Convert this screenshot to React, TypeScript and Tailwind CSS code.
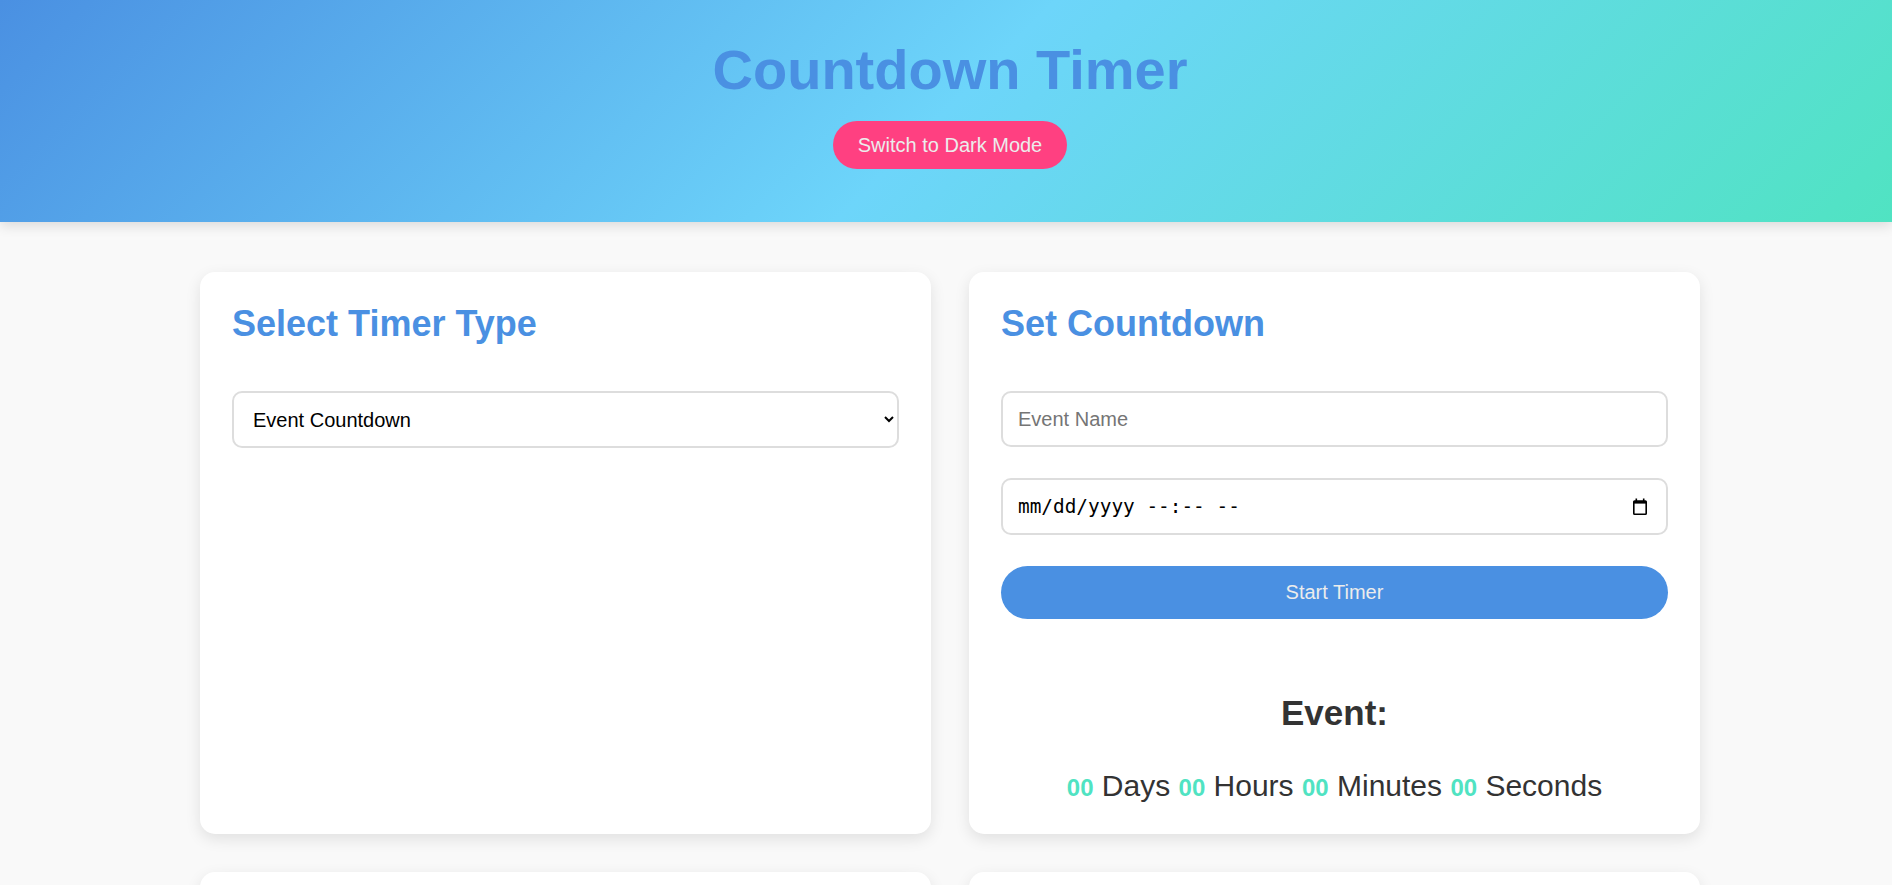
const Num = ({ value }: { value: string }) => (
  <span className="text-[24px] font-bold text-[#50e3c2]">{value}</span>
)

const CalendarIcon = () => (
  <svg width="14" height="17" viewBox="0 0 14 17" fill="none" className="text-black">
    <rect x="2.5" y="0.5" width="1.6" height="3.5" fill="currentColor" />
    <rect x="9.9" y="0.5" width="1.6" height="3.5" fill="currentColor" />
    <rect x="0.8" y="3" width="12.4" height="13.2" rx="0.8" stroke="currentColor" strokeWidth="1.6" />
    <rect x="0.8" y="3" width="12.4" height="2.6" fill="currentColor" />
  </svg>
)

const App = () => {
  return (
    <div className="min-h-screen bg-[#f9f9f9] font-['Liberation_Sans',Arial,sans-serif] leading-[normal] text-[#333]">
      <header className="flex h-[222px] flex-col items-center bg-[linear-gradient(135deg,#4a90e2,#6dd5fa,#50e3c2)] pl-2 pt-[38px] shadow-[0_4px_12px_rgba(0,0,0,0.12)]">
        <h1 className="text-[56px] font-bold leading-[64px] text-[#4a90e2]">Countdown Timer</h1>
        <button className="mt-[19px] flex h-[48px] items-center rounded-full bg-[#ff4081] px-[25px] text-[20px] text-[#ececec]">
          Switch to Dark Mode
        </button>
      </header>

      <main className="grid grid-cols-2 gap-[38px] pb-12 pl-[200px] pr-[192px] pt-[50px]">
        <section className="rounded-[15px] bg-white p-8 shadow-[0_5px_15px_rgba(0,0,0,0.1)]">
          <h2 className="text-[36px] font-bold leading-[40px] text-[#4a90e2]">Select Timer Type</h2>
          <select
            defaultValue="event"
            className="mt-[47px] h-[57px] w-full rounded-[10px] border-2 border-[#ddd] bg-white px-[15px] text-[20px] text-black"
          >
            <option value="event">Event Countdown</option>
            <option value="pomodoro">Pomodoro Timer</option>
            <option value="custom">Custom Timer</option>
          </select>
        </section>

        <section className="flex flex-col rounded-[15px] bg-white px-8 pb-[31px] pt-8 shadow-[0_5px_15px_rgba(0,0,0,0.1)]">
          <h2 className="text-[36px] font-bold leading-[40px] text-[#4a90e2]">Set Countdown</h2>
          <input
            type="text"
            placeholder="Event Name"
            className="mt-[47px] h-[56px] w-full rounded-[10px] border-2 border-[#ddd] px-[15px] text-[20px] text-black placeholder:text-[#757575]"
          />
          <div className="mt-[31px] flex h-[57px] w-full items-center justify-between rounded-[10px] border-2 border-[#ddd] pl-[15px] pr-[19px] text-black">
            <span className="font-['DejaVu_Sans_Mono',monospace] text-[19.4px]">mm/dd/yyyy --:-- --</span>
            <CalendarIcon />
          </div>
          <button className="mt-[31px] h-[53px] w-full rounded-full bg-[#4a90e2] text-[20px] text-[#ececec]">
            Start Timer
          </button>
          <h3 className="mt-[74px] text-center text-[35px] font-bold leading-[40px] text-[#333]">Event:</h3>
          <p className="mt-[36px] text-center text-[30px] text-[#333]">
            <Num value="00" /> Days <Num value="00" /> Hours <Num value="00" /> Minutes <Num value="00" /> Seconds
          </p>
        </section>

        <section className="h-[320px] rounded-[15px] bg-white p-8 shadow-[0_5px_15px_rgba(0,0,0,0.1)]" />
        <section className="h-[320px] rounded-[15px] bg-white p-8 shadow-[0_5px_15px_rgba(0,0,0,0.1)]" />
      </main>
    </div>
  )
}

export default App
